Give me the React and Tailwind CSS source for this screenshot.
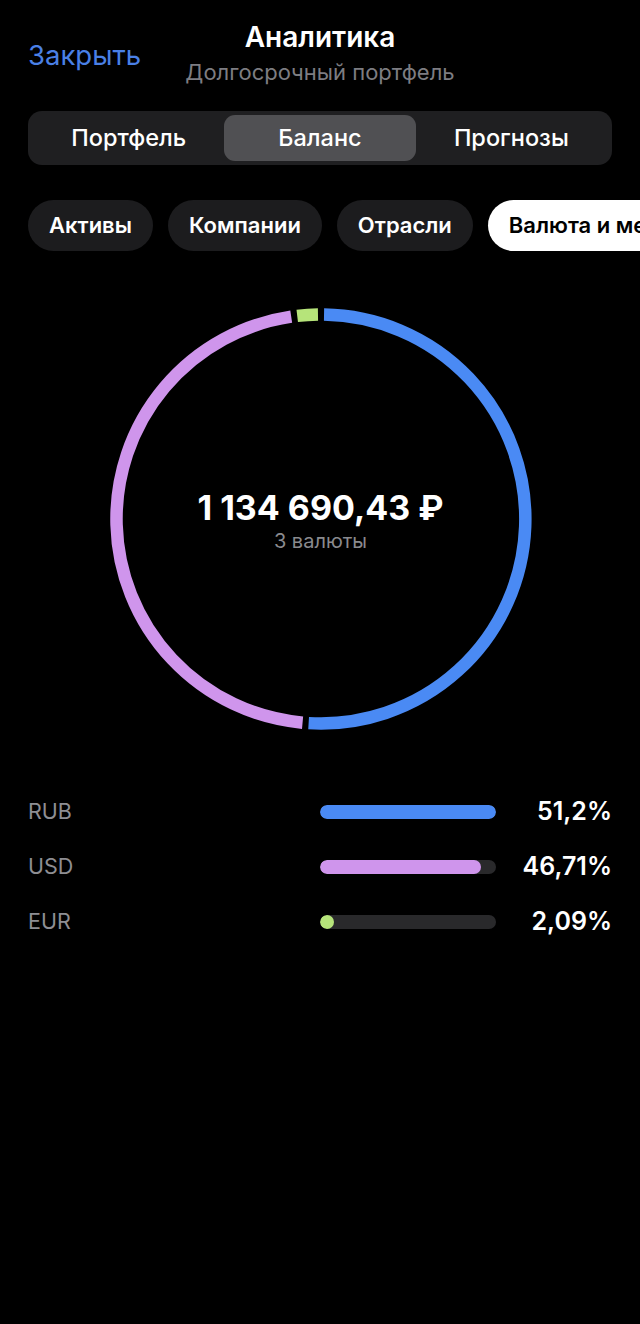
import React from "react";

const CX = 211;
const CY = 211;
const R = 204.5;

function arcPath(startDeg, endDeg) {
  const toXY = (deg) => {
    const a = ((deg - 90) * Math.PI) / 180;
    return [CX + R * Math.cos(a), CY + R * Math.sin(a)];
  };
  const [x1, y1] = toXY(startDeg);
  const [x2, y2] = toXY(endDeg);
  const large = endDeg - startDeg > 180 ? 1 : 0;
  return `M ${x1.toFixed(2)} ${y1.toFixed(2)} A ${R} ${R} 0 ${large} 1 ${x2.toFixed(2)} ${y2.toFixed(2)}`;
}

const segments = [
  { color: "#4a8af4", pct: 51.2 },
  { color: "#cf95ec", pct: 46.71 },
  { color: "#b6e47a", pct: 2.09 },
];

function Donut() {
  const gap = 0.85;
  let acc = 0;
  const paths = segments.map((s) => {
    const start = (acc / 100) * 360;
    acc += s.pct;
    const end = (acc / 100) * 360;
    return { d: arcPath(start + gap, end - gap), color: s.color };
  });
  return (
    <svg width="422" height="422" viewBox="0 0 422 422">
      {paths.map((p, i) => (
        <path key={i} d={p.d} stroke={p.color} strokeWidth="12.5" fill="none" strokeLinecap="butt" />
      ))}
    </svg>
  );
}

const rows = [
  { code: "RUB", pct: "51,2%", w: 176, color: "bg-[#4a8af4]" },
  { code: "USD", pct: "46,71%", w: 161, color: "bg-[#cf95ec]" },
  { code: "EUR", pct: "2,09%", w: 14, color: "bg-[#b6e47a]" },
];

export default function App() {
  return (
    <div className="w-[640px] h-[1324px] bg-black overflow-hidden text-white font-['Inter',sans-serif]">
      <div className="grid grid-cols-[1fr_auto_1fr] px-7 pt-[20px]">
        <div className="self-center mt-[4px] text-[27.5px] leading-[32px] text-[#4a80e6]">Закрыть</div>
        <div className="flex flex-col items-center">
          <div className="text-[28px] leading-[34px] font-semibold">Аналитика</div>
          <div className="mt-[4px] text-[22px] leading-[28px] text-[#7d7d82]">Долгосрочный портфель</div>
        </div>
        <div />
      </div>

      <div className="mx-7 mt-[25px] h-[54px] rounded-[14px] bg-[#1f1f21] px-[5px] py-1 grid grid-cols-3">
        <div className="flex items-center justify-center text-[23.5px] font-medium">Портфель</div>
        <div className="flex items-center justify-center rounded-[11px] bg-[#505053] text-[23.5px] font-medium">Баланс</div>
        <div className="flex items-center justify-center text-[23.5px] font-medium">Прогнозы</div>
      </div>

      <div className="mt-[35px] flex gap-[15px] pl-7 overflow-hidden whitespace-nowrap">
        {["Активы", "Компании", "Отрасли"].map((t) => (
          <div key={t} className="shrink-0 h-[51px] px-[21px] rounded-full bg-[#1c1c1e] flex items-center text-[22px] font-semibold">
            {t}
          </div>
        ))}
        <div className="shrink-0 h-[51px] px-[21px] rounded-full bg-white text-black flex items-center text-[22px] font-semibold">
          Валюта и металлы
        </div>
      </div>

      <div className="mt-[57px] flex justify-center">
        <div className="relative w-[422px] h-[422px] ml-[1px]">
          <Donut />
          <div className="absolute inset-0 flex flex-col items-center justify-center pt-[3px]">
            <div className="text-[34px] leading-[40px] font-bold">1 134 690,43 ₽</div>
            <div className="mt-[1px] text-[20px] leading-[24px] text-[#8a8a8e]">3 валюты</div>
          </div>
        </div>
      </div>

      <div className="mt-[54px] px-7 flex flex-col">
        {rows.map((r) => (
          <div key={r.code} className="h-[55px] flex items-center">
            <div className="flex-1 text-[21.5px] text-[#8e8e93]">{r.code}</div>
            <div className="w-[176px] h-[14px] rounded-full bg-[#29292b] overflow-hidden">
              <div className={`h-full rounded-full ${r.color}`} style={{ width: `${r.w}px` }} />
            </div>
            <div className="w-[116px] text-right text-[25px] font-semibold">{r.pct}</div>
          </div>
        ))}
      </div>
    </div>
  );
}
